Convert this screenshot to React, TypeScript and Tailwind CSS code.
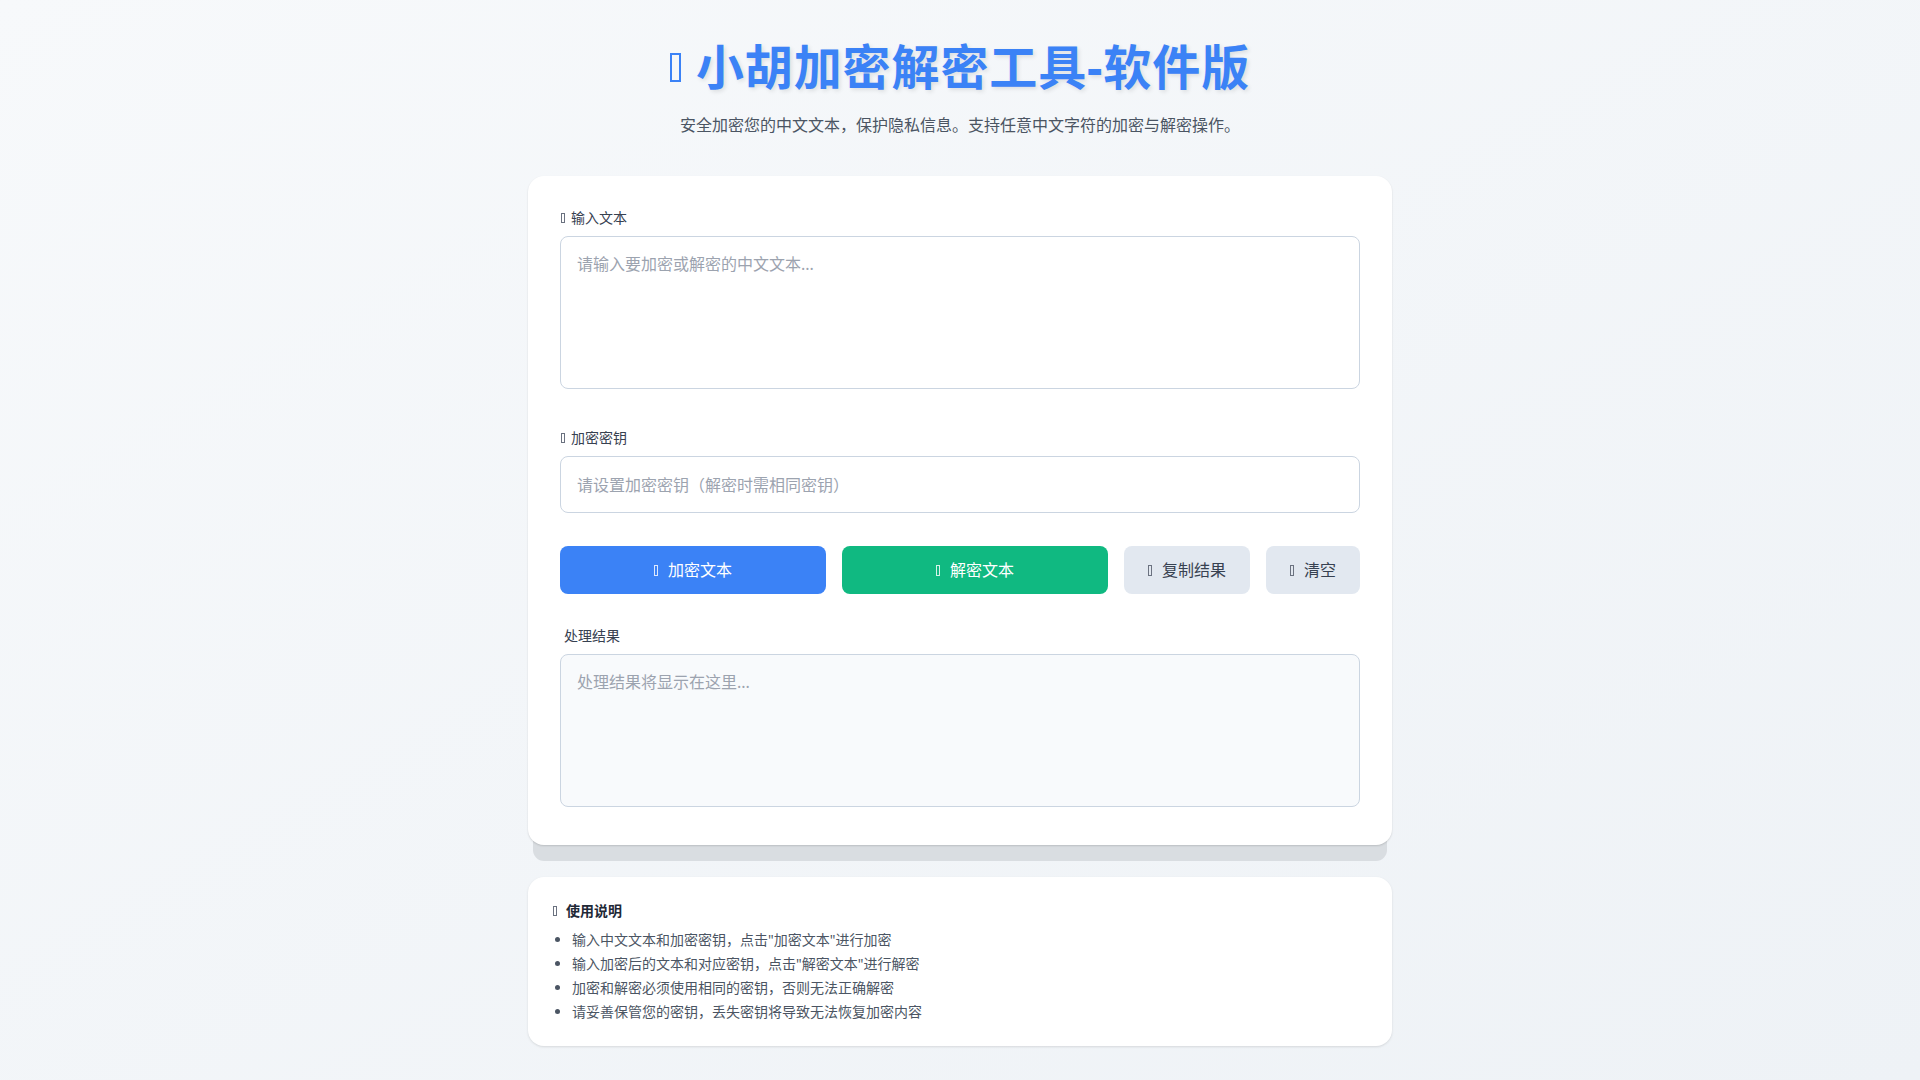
import React from "react";

function Tofu({ className }: { className: string }) {
  return <span className={"inline-block shrink-0 border-current " + className} />;
}

export default function App() {
  return (
    <div className="min-h-screen w-full bg-gradient-to-br from-[#f7f9fb] to-[#eef2f6] font-['Noto_Sans','Noto_Sans_CJK_SC',sans-serif] text-gray-800">
      <div className="mx-auto w-[864px] pt-[43px] pb-[34px]">
        <header className="flex flex-col items-center">
          <h1 className="flex h-[48px] items-center text-[48px] font-bold leading-none tracking-[0.9px] text-[#3b82f6] [text-shadow:2px_2px_4px_rgba(0,0,0,0.1)]">
            <Tofu className="mr-[15px] h-[29px] w-[11px] border-2" />
            <span>小胡加密解密工具-软件版</span>
          </h1>
          <p className="mt-[22px] text-base leading-6 text-[#4b5563]">
            安全加密您的中文文本，保护隐私信息。支持任意中文字符的加密与解密操作。
          </p>
        </header>

        <main className="mt-[39px] rounded-2xl bg-white px-8 pt-8 pb-[38px] shadow-[0_1px_2px_rgba(0,0,0,0.14),0_21px_0_-5px_#d9dde1]">
          <label className="flex h-5 items-center text-sm font-normal leading-5 text-[#374151]">
            <Tofu className="ml-px mr-[6px] h-[10px] w-[4px] border text-[#6b7280]" />
            输入文本
          </label>
          <textarea
            className="mt-2 block h-[153px] w-full resize-none rounded-lg border border-[#cbd5e1] bg-white px-4 py-[15px] text-base leading-6 text-gray-800 outline-none placeholder:text-[#9ca3af]"
            placeholder="请输入要加密或解密的中文文本..."
          />

          <label className="mt-[39px] flex h-5 items-center text-sm font-normal leading-5 text-[#374151]">
            <Tofu className="ml-px mr-[6px] h-[10px] w-[4px] border text-[#6b7280]" />
            加密密钥
          </label>
          <input
            className="mt-2 block h-[57px] w-full rounded-lg border border-[#cbd5e1] bg-white px-4 text-base leading-6 text-gray-800 outline-none placeholder:text-[#9ca3af]"
            placeholder="请设置加密密钥（解密时需相同密钥）"
          />

          <div className="mt-[33px] flex h-[48px] gap-4">
            <button className="flex flex-1 items-center justify-center rounded-lg bg-[#3b82f6] text-base text-white">
              <Tofu className="mr-[10px] h-[11px] w-[4px] border text-[#dbe7fd]" />
              加密文本
            </button>
            <button className="flex flex-1 items-center justify-center rounded-lg bg-[#10b981] text-base text-white">
              <Tofu className="mr-[10px] h-[11px] w-[4px] border text-[#d4f3e8]" />
              解密文本
            </button>
            <button className="flex w-[126px] items-center justify-center rounded-lg bg-[#e2e8f0] text-base text-[#374151]">
              <Tofu className="mr-[10px] h-[11px] w-[4px] border text-[#6b7280]" />
              复制结果
            </button>
            <button className="flex w-[94px] items-center justify-center rounded-lg bg-[#e2e8f0] text-base text-[#374151]">
              <Tofu className="mr-[10px] h-[11px] w-[4px] border text-[#6b7280]" />
              清空
            </button>
          </div>

          <label className="mt-8 block h-5 pl-1 text-sm leading-5 text-[#374151]">处理结果</label>
          <textarea
            readOnly
            className="mt-2 block h-[153px] w-full resize-none rounded-lg border border-[#cbd5e1] bg-[#f8fafc] px-4 py-[15px] text-base leading-6 text-gray-800 outline-none placeholder:text-[#9ca3af]"
            placeholder="处理结果将显示在这里..."
          />
        </main>

        <section className="mt-8 rounded-2xl bg-white p-6 shadow-[0_1px_3px_rgba(0,0,0,0.08),0_1px_2px_rgba(0,0,0,0.04)]">
          <h2 className="flex h-5 items-center text-sm font-bold leading-5 text-[#1f2937]">
            <Tofu className="ml-px mr-[9px] h-[10px] w-[4px] border text-[#6b7280]" />
            使用说明
          </h2>
          <ul className="mt-[9px] list-disc space-y-1 pl-5 text-sm leading-5 text-[#4b5563] marker:text-[#4b5563]">
            <li>输入中文文本和加密密钥，点击"加密文本"进行加密</li>
            <li>输入加密后的文本和对应密钥，点击"解密文本"进行解密</li>
            <li>加密和解密必须使用相同的密钥，否则无法正确解密</li>
            <li>请妥善保管您的密钥，丢失密钥将导致无法恢复加密内容</li>
          </ul>
        </section>
      </div>
    </div>
  );
}
